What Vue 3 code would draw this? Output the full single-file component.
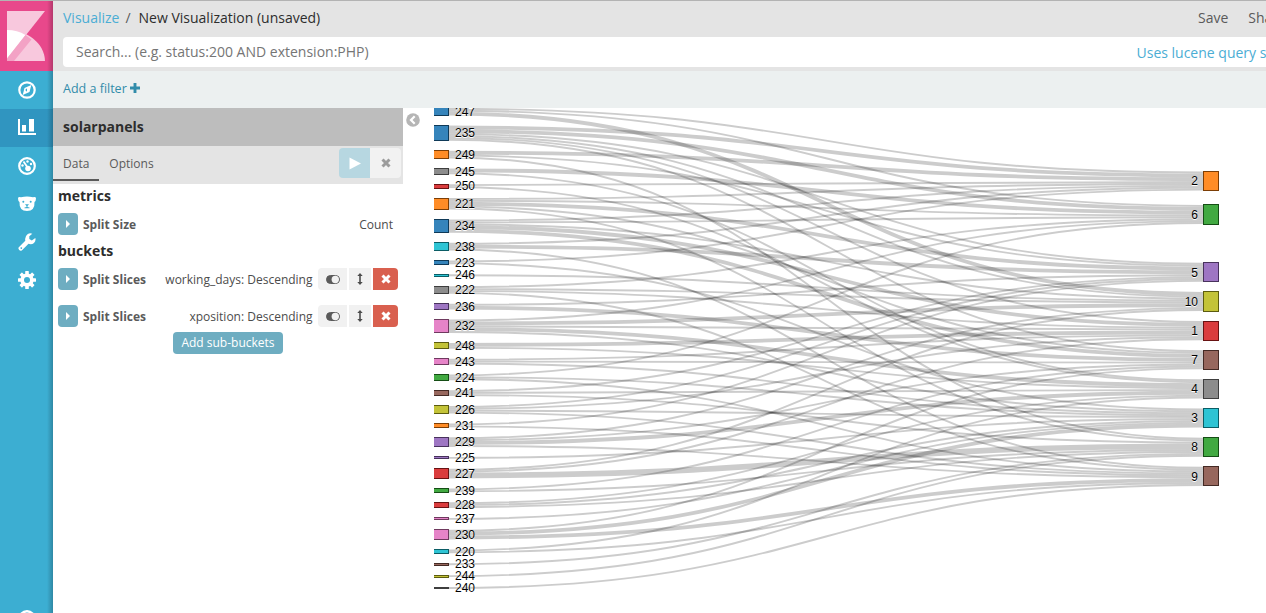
<script setup>
const UNIT = 1.911
const GAP = 10
const C = {
  blue: '#1f77b4', orange: '#ff7f0e', green: '#2ca02c', red: '#d62728', purple: '#9467bd',
  brown: '#8c564b', pink: '#e377c2', gray: '#7f7f7f', olive: '#bcbd22', cyan: '#17becf',
}

// target id -> [colour, top]
const targetSpec = [
  ['2', 'orange', 171.5], ['6', 'green', 204.9], ['5', 'purple', 262.75], ['10', 'olive', 291.9],
  ['1', 'red', 321.05], ['7', 'brown', 350.2], ['4', 'gray', 379.35], ['3', 'cyan', 408.5],
  ['8', 'green', 437.65], ['9', 'brown', 466.8],
]

// source id, colour, [target, weight] pairs ordered by target position
const sourceSpec = [
  ['247', 'blue', [['2', 1], ['6', 1], ['10', 2]]],
  ['235', 'blue', [['2', 2], ['6', 2], ['5', 1], ['10', 1], ['1', 1], ['7', 1]]],
  ['249', 'orange', [['2', 2], ['5', 1], ['8', 1]]],
  ['245', 'gray', [['6', 2], ['4', 1]]],
  ['250', 'red', [['2', 1], ['4', 1]]],
  ['221', 'orange', [['2', 1], ['6', 1], ['5', 2], ['7', 1], ['8', 1]]],
  ['234', 'blue', [['2', 1], ['6', 1], ['10', 1], ['1', 2], ['7', 2]]],
  ['238', 'cyan', [['2', 1], ['5', 2], ['9', 1]]],
  ['223', 'blue', [['2', 1], ['3', 1]]],
  ['246', 'cyan', [['10', 1]]],
  ['222', 'gray', [['6', 1], ['10', 1], ['1', 1], ['9', 1]]],
  ['236', 'purple', [['5', 1], ['7', 2]]],
  ['232', 'pink', [['6', 1], ['10', 2], ['1', 1], ['4', 2], ['3', 1]]],
  ['248', 'olive', [['1', 2], ['4', 1]]],
  ['243', 'pink', [['1', 1], ['7', 1], ['3', 1]]],
  ['224', 'green', [['6', 1], ['3', 1], ['9', 1]]],
  ['241', 'brown', [['5', 1], ['4', 1], ['8', 1]]],
  ['226', 'olive', [['5', 1], ['1', 1], ['3', 1], ['9', 1]]],
  ['231', 'orange', [['5', 1], ['9', 1]]],
  ['229', 'purple', [['10', 1], ['7', 1], ['4', 2], ['9', 1]]],
  ['225', 'purple', [['3', 1]]],
  ['227', 'red', [['10', 1], ['1', 1], ['8', 3]]],
  ['239', 'green', [['7', 1], ['8', 1]]],
  ['228', 'red', [['4', 1], ['3', 1], ['8', 1]]],
  ['237', 'pink', [['3', 1]]],
  ['230', 'pink', [['7', 1], ['3', 2], ['9', 2]]],
  ['220', 'cyan', [['4', 1], ['9', 1]]],
  ['233', 'brown', [['8', 1]]],
  ['244', 'olive', [['8', 1]]],
  ['240', 'gray', [['9', 1]]],
]

const ORIGIN_X = 434
const ORIGIN_Y = 108
const X0 = 448.5 - ORIGIN_X
const X1 = 1203.5 - ORIGIN_X
const MID = (X0 + X1) / 2

function darker(hex) {
  const n = parseInt(hex.slice(1), 16)
  const f = (v) => Math.floor(v * 0.49)
  return `rgb(${f(n >> 16)},${f((n >> 8) & 255)},${f(n & 255)})`
}

const targets = targetSpec.map(([id, c, top]) => ({
  id, x: X1, y: top - ORIGIN_Y, h: 10 * UNIT, fill: C[c], stroke: darker(C[c]), tx: X1 - 5.5, anchor: 'end',
}))
const fillLevel = Object.fromEntries(targets.map((t) => [t.id, t.y]))

const links = []
let cursor = 107.87 - ORIGIN_Y
const sources = sourceSpec.map(([id, c, out]) => {
  const top = cursor
  let y = top
  for (const [to, w] of out) {
    const t = w * UNIT
    const a = y + t / 2
    const b = fillLevel[to] + t / 2
    links.push({ d: `M${X0},${a}C${MID},${a} ${MID},${b} ${X1},${b}`, w: t })
    y += t
    fillLevel[to] += t
  }
  cursor = y + GAP
  return { id, x: X0 - 15, y: top, h: y - top, fill: C[c], stroke: darker(C[c]), tx: X0 + 6.5, anchor: 'start' }
})
const nodes = [...sources, ...targets]

const buckets = ['working_days: Descending', 'xposition: Descending']
</script>

<template>
  <div class="app">
    <aside class="side">
      <div class="logo">
        <svg width="53" height="71" viewBox="0 0 53 71">
          <path d="M7 11H45L7 59z" fill="#f8c8dd" />
          <path d="M7 30C27 30 44.500 43 45 61H7z" fill="#f8c8dd" />
          <path d="M7 30C14 30 20 31.500 25.500 35L7 58.500z" fill="#fff" />
          <path d="M25.500 35L31.500 39.500L14 61H7V58.500z" fill="#f3a2c5" />
        </svg>
      </div>
      <a class="nav">
        <svg width="18" height="18" viewBox="0 0 18 18"><circle cx="9" cy="9" r="7.700" fill="none" stroke="#fff" stroke-width="2.200" /><path d="M13.300 4L11.500 11L4.700 14L6.500 7zM9 7.500a1.500 1.500 0 1 0 .01 3z" fill="#fff" fill-rule="evenodd" /></svg>
      </a>
      <a class="nav active">
        <svg width="18" height="18" viewBox="0 0 18 18"><path d="M0 0h2v14h16v2H0zM4 6h4v6.500H4zM11 0h5V12.500h-5z" fill="#fff" /></svg>
      </a>
      <a class="nav">
        <svg width="18" height="18" viewBox="0 0 18 18"><circle cx="9" cy="9" r="7.800" fill="none" stroke="#fff" stroke-width="2.200" /><circle cx="10" cy="11.500" r="2.800" fill="#fff" /><path d="M5.500 4.500L10 11" stroke="#fff" stroke-width="1.800" /><circle cx="4.500" cy="8.500" r="1.200" fill="#fff" /><circle cx="9.500" cy="4.500" r="1.200" fill="#fff" /><circle cx="13" cy="7" r="1.200" fill="#fff" /></svg>
      </a>
      <a class="nav">
        <svg width="18" height="18" viewBox="0 0 18 18"><path d="M0 3.500Q0 1.500 3 2.200Q9 1 15 2.200Q18 1.500 18 3.500Q18 6 16.500 7Q17 16 9 16Q1 16 1.500 7Q0 6 0 3.500z" fill="#fff" /><g fill="#3caed2"><circle cx="5.300" cy="6.800" r="1" /><circle cx="12.700" cy="6.800" r="1" /><path d="M7 9.300h4l-1.500 1.700v1l2 .5v.8H6.500v-.8l2-.5v-1z" /></g></svg>
      </a>
      <a class="nav">
        <svg width="18" height="18" viewBox="0 0 18 18"><path d="M.8 14.200L7.300 7.700Q6.500 3.500 9.500 1.200Q12 -.3 14.300.8L11.300 3.200V6l2.500 1.500L17.300 5Q18.200 7.500 16 10Q13.500 12 10.500 10.800L4 17.200Q2.500 18.300 1.200 17Q-.2 15.600.8 14.200zM3.300 14.200a.8.800 0 1 0 .01 0z" fill="#fff" fill-rule="evenodd" /></svg>
      </a>
      <a class="nav">
        <svg width="18" height="18" viewBox="0 0 18 18"><g fill="#fff"><rect v-for="a in [0, 45, 90, 135]" :key="a" x="7.200" y="0" width="3.600" height="18" rx=".6" :transform="`rotate(${a} 9 9)`" /><circle cx="9" cy="9" r="6.600" /></g><circle cx="9" cy="9" r="3" fill="#3caed2" /></svg>
      </a>
      <svg class="collapse" width="18" height="18" viewBox="0 0 18 18"><circle cx="9" cy="9" r="7.700" fill="none" stroke="#fff" stroke-width="2.600" /></svg>
    </aside>

    <div class="main">
      <header class="top">
        <div class="crumbs">
          <span class="path"><a class="lnk">Visualize</a><i>/</i><span>New Visualization (unsaved)</span></span>
          <span class="menu"><span>Save</span><span>Share</span></span>
        </div>
        <div class="search">
          <span>Search... (e.g. status:200 AND extension:PHP)</span>
          <a class="lnk hint">Uses lucene query syntax</a>
        </div>
      </header>
      <div class="filters">
        <span>Add a filter</span>
        <svg width="10" height="10" viewBox="0 0 9 9"><path d="M3.200 0h2.600v3.200H9v2.600H5.800V9H3.200V5.800H0V3.200h3.200z" fill="#328caa" /></svg>
      </div>

      <div class="body">
        <section class="editor">
          <div class="index">solarpanels</div>
          <div class="tabs">
            <span class="tab on">Data</span>
            <span class="tab">Options</span>
            <div class="acts">
              <span class="play"><svg width="12" height="13" viewBox="0 0 12 13"><path d="M.5 .5L12 6.500L.5 12.500z" fill="#fff" /></svg></span>
              <span class="discard"><svg width="10" height="10" viewBox="0 0 10 10"><path d="M1.500 1.500l7 7m0-7l-7 7" stroke="#9c9c9c" stroke-width="3" /></svg></span>
            </div>
          </div>
          <h3>metrics</h3>
          <div class="row first">
            <span class="tog"><svg width="4" height="8" viewBox="0 0 4 8"><path d="M0 0l4 4-4 4z" fill="#fff" /></svg></span>
            <b>Split Size</b>
            <span class="desc count">Count</span>
          </div>
          <h3>buckets</h3>
          <div v-for="b in buckets" :key="b" class="row">
            <span class="tog"><svg width="4" height="8" viewBox="0 0 4 8"><path d="M0 0l4 4-4 4z" fill="#fff" /></svg></span>
            <b>Split Slices</b>
            <span class="desc">{{ b }}</span>
            <span class="btns">
              <span class="sw"><svg width="14" height="9" viewBox="0 0 14 9"><rect x=".5" y=".5" width="13" height="8" rx="4" fill="#5a5a5a" stroke="#5a5a5a" /><circle cx="9.300" cy="4.500" r="3.700" fill="#f1f1f1" /></svg></span>
              <span class="mv"><svg width="6" height="12" viewBox="0 0 6 12"><path d="M3 0l2.700 3H3.800v6h1.900L3 12 .3 9h1.900V3H.3z" fill="#4c4c4c" /></svg></span>
              <span class="rm"><svg width="10" height="10" viewBox="0 0 10 10"><path d="M1.500 1.500l7 7m0-7l-7 7" stroke="#fff" stroke-width="3" /></svg></span>
            </span>
          </div>
          <button class="add">Add sub-buckets</button>
        </section>

        <div class="gutter">
          <svg width="14" height="14" viewBox="0 0 14 14"><circle cx="7" cy="7" r="6.800" fill="#b5b5b5" /><path d="M8.700 3.300L5 7l3.700 3.700" fill="none" stroke="#fff" stroke-width="2.200" /></svg>
        </div>

        <svg class="sankey" width="832" height="505">
          <path v-for="(l, i) in links" :key="i" class="link" :d="l.d" :stroke-width="l.w" />
          <g v-for="n in nodes" :key="n.id">
            <rect :x="n.x" :y="n.y" width="15" :height="n.h" :fill="n.fill" :stroke="n.stroke" />
            <text :x="n.tx" :y="n.y + n.h / 2" dy=".35em" :text-anchor="n.anchor">{{ n.id }}</text>
          </g>
        </svg>
      </div>
    </div>
  </div>
</template>

<style>
body { overflow: hidden; background: #fff; }
</style>
<style scoped>
.app { display: flex; width: 1266px; height: 613px; overflow: hidden; font-family: "Open Sans", "Liberation Sans", sans-serif; font-size: 14px; color: #2d2d2d; box-sizing: border-box; position: relative; }
.app::before { content: ""; position: absolute; left: 0; top: 0; width: 100%; height: 1px; background: #b3b3b3; z-index: 2; }
.side { width: 53px; height: 613px; flex: none; background: #3caed2; position: relative; overflow: hidden; }
.side::after { content: ""; position: absolute; top: 0; right: 0; width: 6px; height: 100%; background: linear-gradient(to right, rgba(0, 0, 0, 0), rgba(0, 0, 0, .22)); }
.logo { height: 71px; background: #e8488b; }
.logo svg { display: block; }
.nav { display: flex; height: 38px; align-items: center; justify-content: center; padding-left: 1px; }
.nav.active { background: #3095c0; }
.collapse { position: absolute; left: 18px; top: 610px; }
.main { flex: 1; min-width: 0; }
.top { height: 71px; background: #e4e4e4; box-sizing: border-box; padding: 1px 0 0 10px; overflow: hidden; }
.crumbs { display: flex; justify-content: space-between; height: 36px; line-height: 34px; }
.path i { font-style: normal; margin: 0 8px 0 6px; color: #5a5a5a; }
.lnk { color: #4badd4; }
.menu { display: flex; gap: 20px; width: 68px; color: #5a5a5a; overflow: hidden; white-space: nowrap; }
.search { height: 30px; border-radius: 4px 0 0 4px; background: #fff; display: flex; justify-content: space-between; padding-left: 13px; line-height: 29px; color: #757575; white-space: nowrap; overflow: hidden; }
.hint { width: 129.5px; line-height: 32px; overflow: hidden; }
.filters { height: 37px; background: #ecf0f0; display: flex; align-items: center; gap: 3px; padding-left: 10px; font-size: 12.5px; color: #328caa; box-sizing: border-box; padding-bottom: 3px; }
.body { display: flex; height: 505px; }
.editor { width: 350px; flex: none; }
.index { height: 38px; line-height: 37px; background: #bdbdbd; padding-left: 10px; font-weight: 700; }
.tabs { height: 38px; background: #e4e4e4; display: flex; font-size: 12px; color: #5a5a5a; }
.tab { padding: 0 10px; line-height: 36px; height: 33px; }
.tab.on { border-bottom: 2px solid #5a5a5a; }
.acts { margin: 2px 2px 0 auto; display: flex; height: 30px; border-radius: 4px; overflow: hidden; }
.play, .discard, .tog, .sw, .mv, .rm { display: flex; align-items: center; justify-content: center; }
.play { width: 31px; background: #b7d7e1; }
.discard { width: 31px; background: #f2f2f2; }
h3 { margin: 0; padding-left: 5px; font-size: 14px; font-weight: 700; line-height: 23px; height: 29px; }
.row { display: flex; align-items: center; height: 22px; margin: 0 5px 15px; font-size: 12px; line-height: 22px; color: #4c4c4c; }
.row.first { margin-bottom: 4px; }
.row b { font-weight: 700; margin-left: 5px; padding-top: 1px; color: #5a5a5a; }
.tog { width: 20px; height: 22px; border-radius: 4px; background: #6eadc1; }
.desc { margin-left: auto; padding-top: 1px; }
.count { margin-right: 5px; }
.btns { display: flex; gap: 2px; margin-left: 5.5px; height: 22px; border-radius: 4px; overflow: hidden; }
.sw { width: 29px; background: #f1f1f1; }
.mv { width: 22px; background: #f1f1f1; }
.rm { width: 25px; background: #d9604f; }
.add { display: block; margin: -10px auto 0; width: 110px; height: 22px; border: 0; padding: 0; border-radius: 4px; background: #6eadc1; color: #fff; font: 12px/20px "Open Sans", sans-serif; }
.gutter { width: 31px; padding: 5px 0 0 3px; box-sizing: border-box; flex: none; }
.gutter svg { display: block; }
.sankey { display: block; overflow: hidden; font: 12px "Liberation Sans", Arial, sans-serif; }
.link { fill: none; stroke: #000; stroke-opacity: .2; }
.sankey rect { fill-opacity: .9; shape-rendering: crispEdges; }
.sankey text { fill: #000; text-shadow: 0 1px 0 #fff; }
</style>
